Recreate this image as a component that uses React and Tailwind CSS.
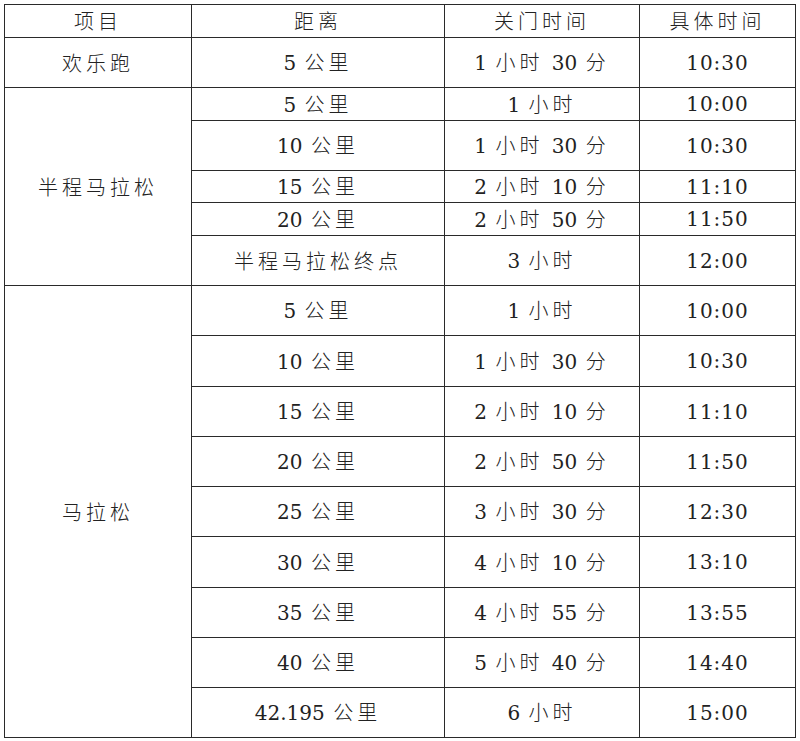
export default function App() {
  const rows = [
    { group: "欢乐跑", span: 1, dist: "5 公里", close: "1 小时 30 分", time: "10:30", h: 50 },
    { group: "半程马拉松", span: 5, dist: "5 公里", close: "1 小时", time: "10:00", h: 33 },
    { dist: "10 公里", close: "1 小时 30 分", time: "10:30", h: 50 },
    { dist: "15 公里", close: "2 小时 10 分", time: "11:10", h: 32 },
    { dist: "20 公里", close: "2 小时 50 分", time: "11:50", h: 33 },
    { dist: "半程马拉松终点", close: "3 小时", time: "12:00", h: 50 },
    { group: "马拉松", span: 9, dist: "5 公里", close: "1 小时", time: "10:00", h: 50 },
    { dist: "10 公里", close: "1 小时 30 分", time: "10:30", h: 51 },
    { dist: "15 公里", close: "2 小时 10 分", time: "11:10", h: 50 },
    { dist: "20 公里", close: "2 小时 50 分", time: "11:50", h: 50 },
    { dist: "25 公里", close: "3 小时 30 分", time: "12:30", h: 50 },
    { dist: "30 公里", close: "4 小时 10 分", time: "13:10", h: 51 },
    { dist: "35 公里", close: "4 小时 55 分", time: "13:55", h: 50 },
    { dist: "40 公里", close: "5 小时 40 分", time: "14:40", h: 50 },
    { dist: "42.195 公里", close: "6 小时", time: "15:00", h: 50 },
  ];

  const cell =
    "border border-[#2a2a2a] text-center align-middle p-0 font-light";

  // latin digits in a serif face, CJK falls through to Noto
  const serif = "font-['DejaVu_Serif','Liberation_Serif',serif] font-normal";

  const fmt = (s) =>
    s.split(/(\d[\d.:]*)/).map((part, i) =>
      /^\d/.test(part) ? (
        <span key={i} className={serif + " tracking-[0px] text-[20px]"}>
          {part}
        </span>
      ) : (
        <span key={i}>{part}</span>
      )
    );

  return (
    <div
      className="bg-white w-[800px] h-[741px] pt-[4px] pl-[4px] font-['Noto_Sans_CJK_SC',sans-serif]"
    >
      <table className="table-fixed border-collapse w-[791px] text-[20px] leading-none text-[#222] tracking-[4px]">
        <colgroup>
          <col className="w-[187px]" />
          <col className="w-[253px]" />
          <col className="w-[195px]" />
          <col className="w-[156px]" />
        </colgroup>
        <thead>
          <tr className="h-[33px]">
            <th className={cell}>项目</th>
            <th className={cell}>距离</th>
            <th className={cell}>关门时间</th>
            <th className={cell}>具体时间</th>
          </tr>
        </thead>
        <tbody>
          {rows.map((r, i) => (
            <tr key={i} style={{ height: r.h }}>
              {r.group && (
                <td rowSpan={r.span} className={cell}>
                  {r.group}
                </td>
              )}
              <td className={cell}>{fmt(r.dist)}</td>
              <td className={cell}>{fmt(r.close)}</td>
              <td className={cell + " " + serif + " tracking-[1px]"}>{r.time}</td>
            </tr>
          ))}
        </tbody>
      </table>
    </div>
  );
}
